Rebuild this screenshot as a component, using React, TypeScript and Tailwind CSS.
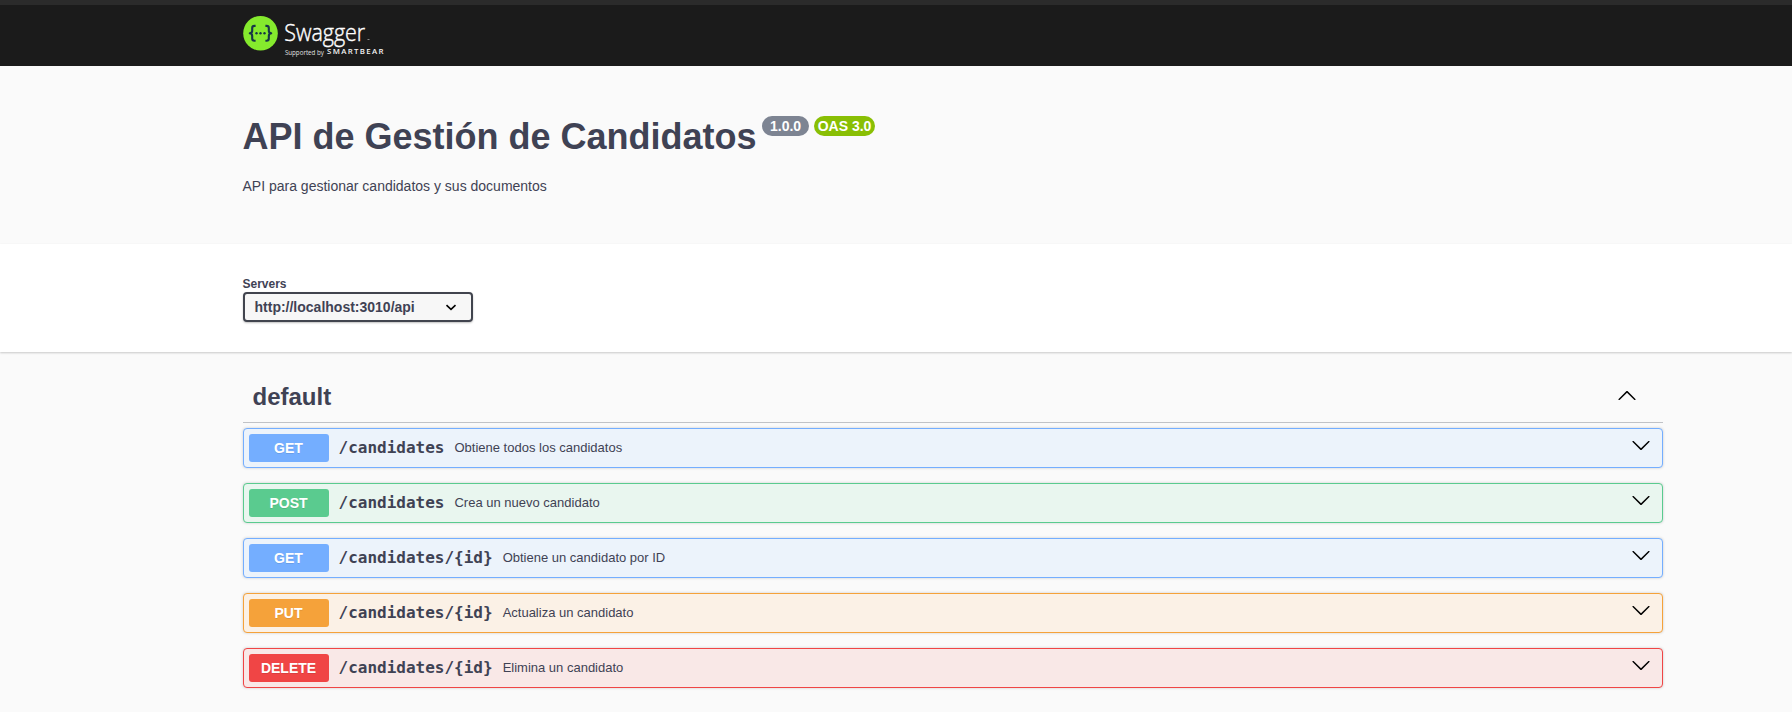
import React from 'react';

type Method = 'GET' | 'POST' | 'PUT' | 'DELETE';

const styles: Record<Method, { row: string; badge: string }> = {
  GET: { row: 'border-[#74aeff] bg-[#ecf3fb]', badge: 'bg-[#74aeff]' },
  POST: { row: 'border-[#5acb8f] bg-[#e9f6ef]', badge: 'bg-[#5acb8f]' },
  PUT: { row: 'border-[#f5a23a] bg-[#fbf1e6]', badge: 'bg-[#f5a23a]' },
  DELETE: { row: 'border-[#f04545] bg-[#f9e8e7]', badge: 'bg-[#f04545]' },
};

const operations: { method: Method; path: string; summary: string }[] = [
  { method: 'GET', path: '/candidates', summary: 'Obtiene todos los candidatos' },
  { method: 'POST', path: '/candidates', summary: 'Crea un nuevo candidato' },
  { method: 'GET', path: '/candidates/{id}', summary: 'Obtiene un candidato por ID' },
  { method: 'PUT', path: '/candidates/{id}', summary: 'Actualiza un candidato' },
  { method: 'DELETE', path: '/candidates/{id}', summary: 'Elimina un candidato' },
];

function Arrow({ up = false, className = '' }: { up?: boolean; className?: string }) {
  return (
    <svg viewBox="0 0 20 20" className={`size-5 shrink-0 ${up ? 'rotate-180' : ''} ${className}`} fill="#000">
      <path d="M17.418 6.109c.272-.268.709-.268.979 0s.271.701 0 .969l-7.908 7.83c-.27.268-.707.268-.979 0l-7.908-7.83c-.27-.268-.27-.701 0-.969.271-.268.709-.268.979 0L10 13.25l7.418-7.141z" />
    </svg>
  );
}

function Logo() {
  return (
    <svg width="150" height="46" viewBox="0 0 150 46" className="block">
      <circle cx="17.5" cy="18.3" r="17.3" fill="#85ea2d" />
      <g fill="none" stroke="#173647" strokeWidth="2.1" strokeLinejoin="round">
        <path d="M12.6 10.9h-1.2q-2.2 0-2.2 2.2v2.6q0 2.4-2.4 2.6 2.4.2 2.4 2.6v2.6q0 2.2 2.2 2.2h1.2" />
        <path d="M22.4 10.9h1.2q2.2 0 2.2 2.2v2.6q0 2.4 2.4 2.6-2.4.2-2.4 2.6v2.6q0 2.2-2.2 2.2h-1.2" />
      </g>
      <g fill="#173647">
        <circle cx="13.5" cy="18.3" r="1.2" />
        <circle cx="17.5" cy="18.3" r="1.2" />
        <circle cx="21.5" cy="18.3" r="1.2" />
      </g>
      <text x="41.2" y="25.5" fill="#fff" stroke="#fff" strokeWidth="0.4" fontFamily="'Open Sans', sans-serif" fontWeight="300" fontSize="23" textLength="81" lengthAdjust="spacingAndGlyphs">Swagger</text>
      <path d="M124.5 24.5h2" stroke="#888" strokeWidth="1" />
      <text x="41.9" y="39.5" fill="#e0e0e0" fontFamily="'Open Sans', sans-serif" fontSize="6.4" textLength="39" lengthAdjust="spacingAndGlyphs">Supported by</text>
      <text x="84" y="39.2" fill="#f4f4f4" fontFamily="'Open Sans', sans-serif" fontWeight="600" fontSize="7.8" textLength="56.5" lengthAdjust="spacing">SMARTBEAR</text>
    </svg>
  );
}

export default function App() {
  return (
    <div className="h-[712px] overflow-hidden bg-[#fafafa] font-['Liberation_Sans',Arial,sans-serif] text-[#3f4254]">
      <header className="h-[66px] border-t-[5px] border-[#2b2b2b] bg-[#1b1b1b] pl-[242.5px] pt-2.5">
        <Logo />
      </header>

      <section className="h-[178px] pl-[242.5px] pt-[50px]">
        <div className="flex items-start">
          <h1 className="text-[36px] font-bold leading-[41px]">API de Gestión de Candidatos</h1>
          <span className="ml-[5.5px] flex h-5 w-[47px] items-center justify-center rounded-full bg-[#7d8492] text-sm font-bold leading-none text-white">1.0.0</span>
          <span className="ml-[5px] flex h-5 w-[61px] items-center justify-center whitespace-nowrap rounded-full bg-[#89bf04] text-sm font-bold leading-none text-white">OAS 3.0</span>
        </div>
        <p className="mt-[21px] text-sm leading-4">API para gestionar candidatos y sus documentos</p>
      </section>

      <section className="h-[108px] bg-white pl-[242.5px] pt-[33px] shadow-[0_1px_2px_0_rgba(0,0,0,0.2)]">
        <div className="text-xs font-bold leading-[15px]">Servers</div>
        <button className="flex h-[30px] w-[230px] items-center justify-between rounded border-2 border-[#41444e] bg-[#f7f7f7] pl-2.5 pr-[13px] text-sm font-bold leading-4 shadow-[0_1px_2px_0_rgba(0,0,0,0.25)]">
          http://localhost:3010/api
          <svg width="14" height="14" viewBox="0 0 14 14" fill="none" stroke="#000" strokeWidth="1.6">
            <path d="M2.5 5.1 7 9.3l4.5-4.2" />
          </svg>
        </button>
      </section>

      <main className="ml-[242.5px] w-[1420px] pt-[21px]">
        <div className="flex h-[50px] items-start justify-between border-b border-[#3b4151]/30 pl-2.5 pr-[26px]">
          <h2 className="pt-2.5 text-2xl font-bold leading-7">default</h2>
          <Arrow up className="mt-[13px]" />
        </div>
        <div className="mt-[5px] flex flex-col gap-[15px]">
          {operations.map((op) => (
            <div
              key={op.method + op.path}
              className={`flex h-10 items-center rounded border pl-[5px] pr-[11px] shadow-[0_0_3px_rgba(0,0,0,0.19)] ${styles[op.method].row}`}
            >
              <span className={`flex h-7 w-20 items-center justify-center rounded-[3px] text-sm font-bold leading-4 text-white [text-shadow:0_1px_0_rgba(0,0,0,0.1)] ${styles[op.method].badge}`}>
                {op.method}
              </span>
              <span className="ml-2.5 font-['DejaVu_Sans_Mono',monospace] text-base font-bold leading-5">{op.path}</span>
              <span className="ml-2.5 flex-1 text-[13px] leading-4">{op.summary}</span>
              <Arrow className="-mt-1.5" />
            </div>
          ))}
        </div>
      </main>
    </div>
  );
}
